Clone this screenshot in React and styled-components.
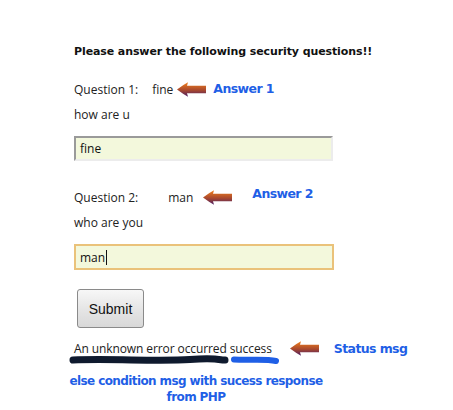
import React from "react";
import styled, { createGlobalStyle } from "styled-components";

const Global = createGlobalStyle`
  html, body { margin: 0; padding: 0; background: #fff; }
  body { font-family: "DejaVu Sans", "Noto Sans", sans-serif; color: #111; }
`;

const Page = styled.div`
  width: 453px;
  height: 410px;
  box-sizing: border-box;
  padding: 44px 0 0 74px;
  display: flex;
  flex-direction: column;
  align-items: flex-start;
`;

const Heading = styled.div`
  font-family: "DejaVu Sans", sans-serif;
  font-weight: bold;
  font-size: 11px;
  letter-spacing: -0.1px;
  line-height: 16px;
  color: #111;
`;

const QRow = styled.div`
  display: flex;
  align-items: center;
  height: 20px;
  margin-top: ${(p) => p.$mt}px;
  font-family: "Open Sans", sans-serif;
  font-size: 12px;
  color: #222;
`;

const Answer = styled.span`
  margin-left: ${(p) => p.$ml}px;
`;

const Note = styled.span`
  font-family: "DejaVu Sans", sans-serif;
  font-weight: bold;
  font-size: 12.5px;
  letter-spacing: -0.6px;
  color: #1f5fe6;
  margin-left: ${(p) => p.$ml}px;
  position: relative;
  top: ${(p) => p.$dy || 0}px;
`;

const Prompt = styled.div`
  font-family: "Open Sans", sans-serif;
  font-size: 12px;
  color: #222;
  line-height: 16px;
  margin-top: ${(p) => p.$mt}px;
`;

const Field = styled.div`
  box-sizing: border-box;
  width: ${(p) => p.$w}px;
  height: ${(p) => p.$h}px;
  margin-top: ${(p) => p.$mt}px;
  background: #f3f8dc;
  display: flex;
  align-items: center;
  padding-left: 4px;
  font-family: "Open Sans", sans-serif;
  font-size: 12px;
  color: #111;
  ${(p) =>
    p.$focus
      ? `border: 2px solid #eac27a;`
      : `border-top: 2px solid #9a9a9a; border-left: 2px solid #9a9a9a; border-right: 2px solid #ececec; border-bottom: 2px solid #ececec;`}
`;

const Caret = styled.span`
  display: inline-block;
  width: 1px;
  height: 15px;
  background: #111;
  margin-left: 1px;
`;

const SubmitButton = styled.button`
  box-sizing: border-box;
  margin-top: 19px;
  margin-left: 3px;
  width: 67px;
  height: 39px;
  border: 1px solid #8a8a8a;
  border-radius: 3px;
  background: linear-gradient(#f7f7f7, #e6e6e6 50%, #d8d8d8);
  font-family: "Liberation Sans", Arial, sans-serif;
  font-size: 14px;
  color: #111;
  padding: 0;
`;

const StatusRow = styled.div`
  display: flex;
  align-items: center;
  margin-top: 11px;
  height: 18px;
`;

const StatusText = styled.span`
  position: relative;
  font-family: "Open Sans", sans-serif;
  font-size: 12px;
  color: #222;
  letter-spacing: -0.1px;
`;

const Scribble = styled.svg`
  position: absolute;
  left: -4px;
  top: 15px;
  overflow: visible;
`;

const Caption = styled.div`
  width: 272px;
  margin-left: -14px;
  margin-top: 16px;
  text-align: center;
  font-family: "DejaVu Sans", sans-serif;
  font-weight: bold;
  font-size: 12px;
  letter-spacing: -0.6px;
  line-height: 16px;
  color: #1f5fe6;
`;

const ArrowSvg = styled.svg`
  margin-left: ${(p) => p.$ml}px;
  flex: none;
`;

function Arrow({ ml, id }) {
  return (
    <ArrowSvg $ml={ml} width="29" height="15" viewBox="0 0 29 15">
      <defs>
        <linearGradient id={id} x1="0" y1="0" x2="0" y2="1">
          <stop offset="0" stopColor="#f07f1c" />
          <stop offset="0.55" stopColor="#a8482e" />
          <stop offset="1" stopColor="#4a1e66" />
        </linearGradient>
      </defs>
      <path d="M0 7.5 Q6 3 11 0.3 L10 3.8 L29 3.8 L29 11.2 L10 11.2 L11 14.7 Q6 12 0 7.5 Z" fill={`url(#${id})`} />
    </ArrowSvg>
  );
}

export default function App() {
  return (
    <>
      <Global />
      <Page>
        <Heading>Please answer the following security questions!!</Heading>
        <QRow $mt={19}>
          <span>Question 1:</span>
          <Answer $ml={14}>fine</Answer>
          <Arrow ml={4} id="g1" />
          <Note $ml={7} $dy={-1}>Answer 1</Note>
        </QRow>
        <Prompt $mt={8}>how are u</Prompt>
        <Field $w={259} $h={25} $mt={13}>fine</Field>
        <QRow $mt={26}>
          <span>Question 2:</span>
          <Answer $ml={30}>man</Answer>
          <Arrow ml={10} id="g2" />
          <Note $ml={20} $dy={-4}>Answer 2</Note>
        </QRow>
        <Prompt $mt={8}>who are you</Prompt>
        <Field $w={260} $h={26} $mt={13} $focus>
          man<Caret />
        </Field>
        <SubmitButton>Submit</SubmitButton>
        <StatusRow>
          <StatusText>
            An unknown error occurred success
            <Scribble width="215" height="10" viewBox="0 0 215 10">
              <path d="M3 5 C40 3.5, 90 6.5, 120 4.5 S150 5.5, 155 5" stroke="#0f1a2e" strokeWidth="7" strokeLinecap="round" fill="none" />
              <path d="M164 4.5 C180 5.5, 195 3.5, 206 6" stroke="#1f5fe6" strokeWidth="6" strokeLinecap="round" fill="none" />
            </Scribble>
          </StatusText>
          <Arrow ml={18} id="g3" />
          <Note $ml={15}>Status msg</Note>
        </StatusRow>
        <Caption>else condition msg with sucess response from PHP</Caption>
      </Page>
    </>
  );
}
